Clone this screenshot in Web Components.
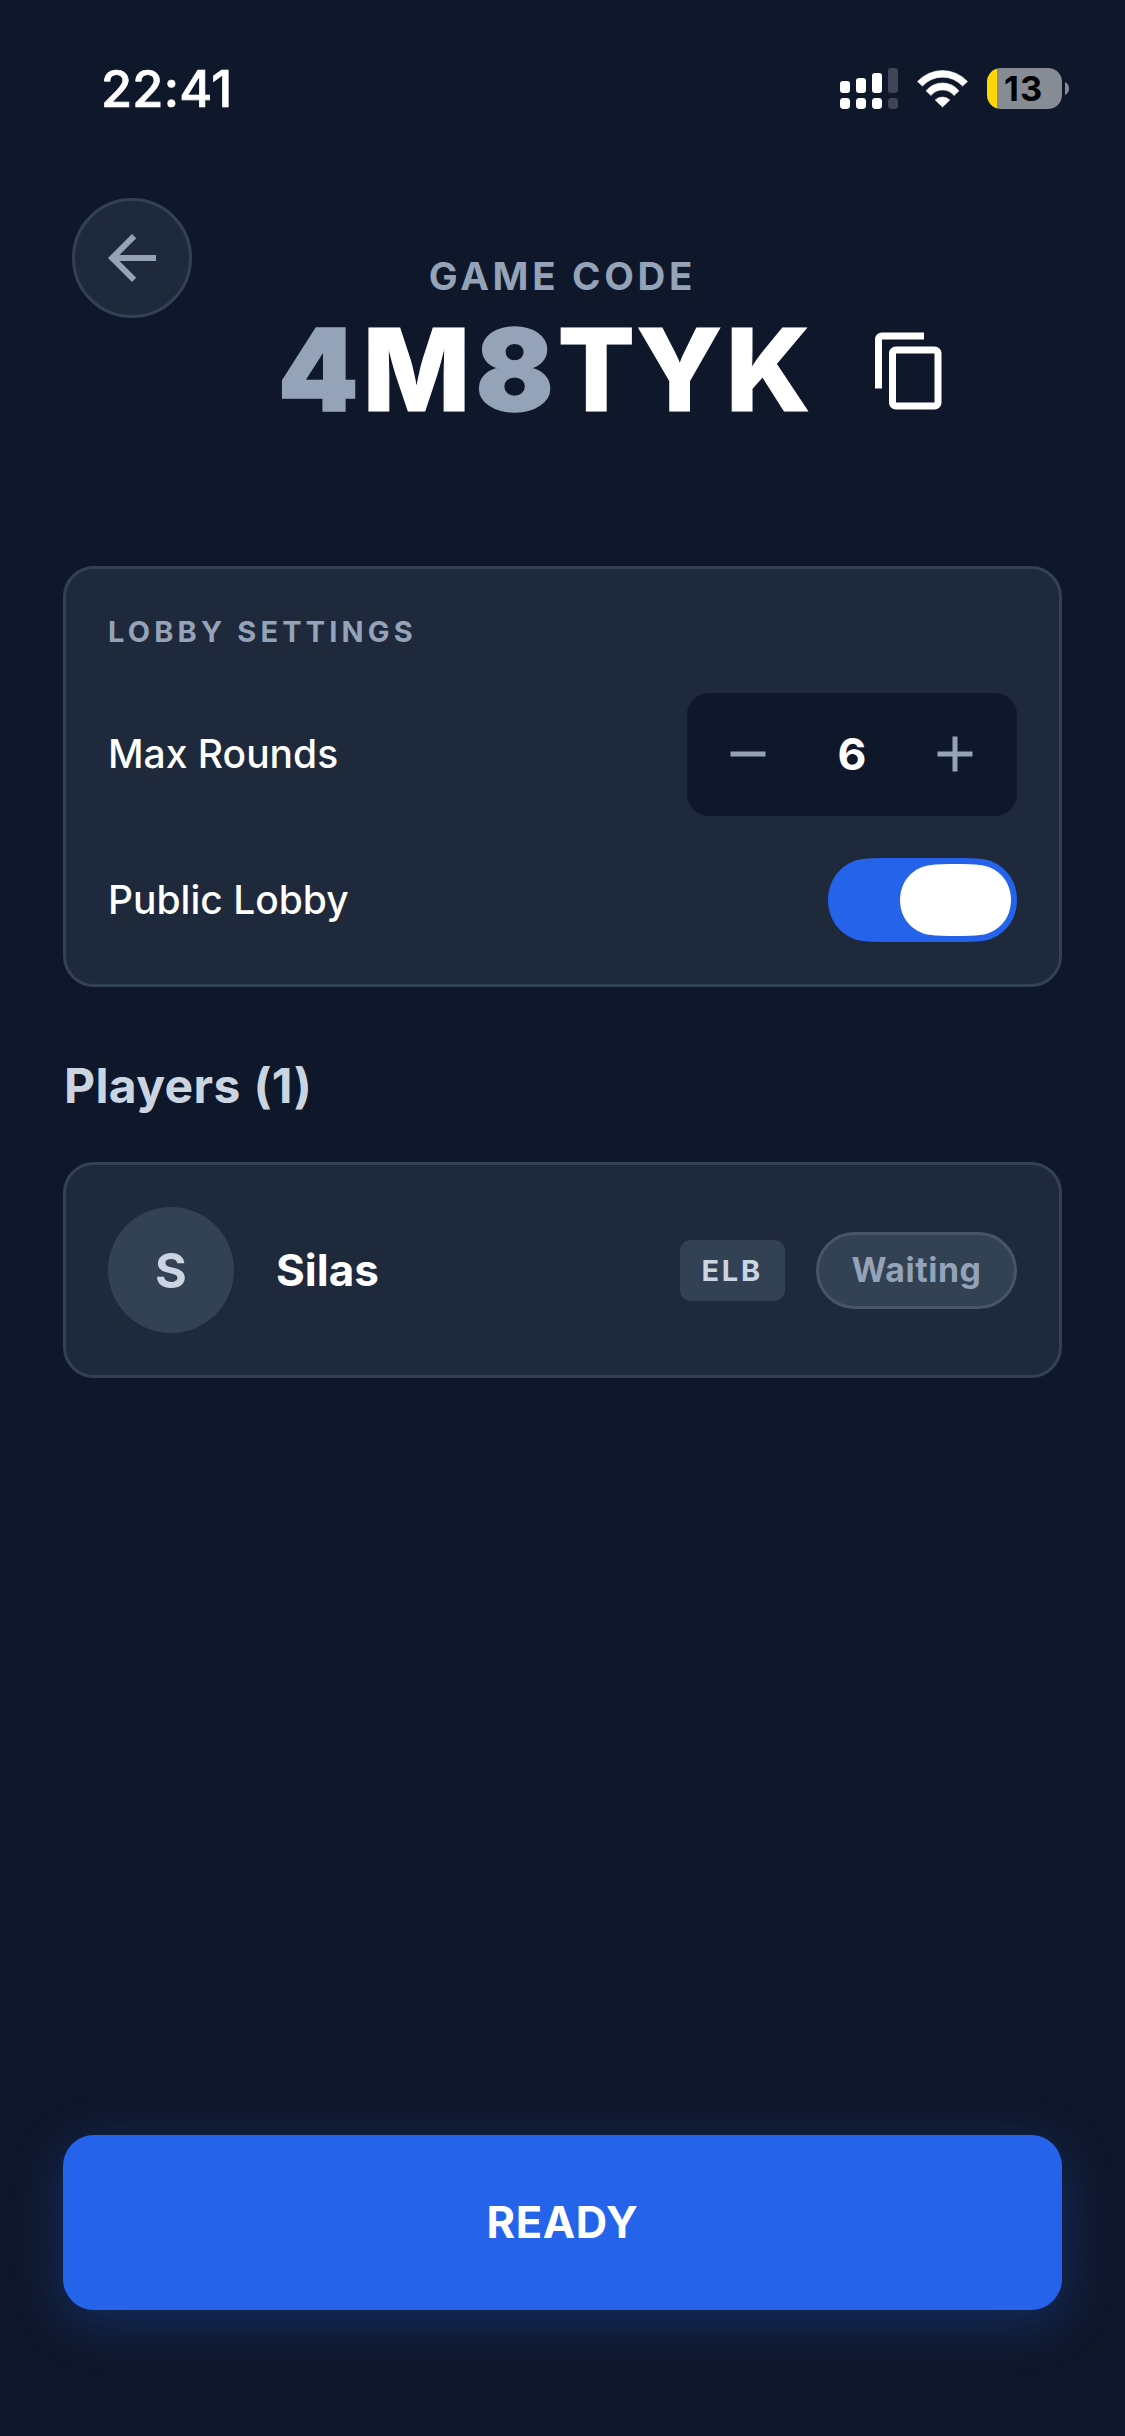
<!DOCTYPE html>
<html lang="en">
<head>
<meta charset="utf-8">
<title>Game lobby</title>
<style>
  html, body { margin: 0; height: 100%; }
  body {
    background: #0f172a;
    color: #fff;
    font-family: Inter, "Liberation Sans", sans-serif;
    --surface: #1e293b;
    --line: #334155;
    --muted: #94a3b8;
    --soft: #cbd5e1;
    --accent: #2563eb;
  }
</style>
</head>
<body>
<lobby-screen></lobby-screen>

<script>
const define = (name, html) => {
  const template = document.createElement('template');
  template.innerHTML = html;
  customElements.define(name, class extends HTMLElement {
    constructor() {
      super();
      this.attachShadow({ mode: 'open' }).append(template.content.cloneNode(true));
    }
  });
};

define('signal-icon', `
  <style>:host{display:block;width:58px;height:41px}svg{display:block}</style>
  <svg width="58" height="41" viewBox="0 0 58 41" fill="#fff">
    <rect x="0" y="13" width="10" height="12" rx="3"/>
    <rect x="16" y="10" width="10" height="15" rx="3"/>
    <rect x="32" y="5" width="10" height="20" rx="3"/>
    <rect x="48" y="0" width="10" height="25" rx="3" fill="#3f4556"/>
    <rect x="0" y="30" width="10" height="11" rx="3.4"/>
    <rect x="16" y="30" width="10" height="11" rx="3.4"/>
    <rect x="32" y="30" width="10" height="11" rx="3.4"/>
    <rect x="48" y="30" width="10" height="11" rx="3.4" fill="#3f4556"/>
  </svg>`);

define('wifi-icon', `
  <style>:host{display:block;width:51px;height:37px}svg{display:block;overflow:visible}</style>
  <svg width="51" height="37" viewBox="0 0 51 37" fill="#fff" stroke="#fff" stroke-width=".6" stroke-linejoin="round">
    <path d="M.5 11.5A34 34 0 0 1 50.5 11.5L45.6 16.1A27 27 0 0 0 5.4 16.1Z"/>
    <path d="M9 20.8A21.3 21.3 0 0 1 42 20.8L37 25.5A14.6 14.6 0 0 0 14 25.5Z"/>
    <path d="M18.2 30A10.5 10.5 0 0 1 32.8 30L25.5 37Z"/>
  </svg>`);

define('battery-icon', `
  <style>
    :host{display:flex;align-items:center;gap:3px}
    .body{display:flex;width:75px;height:41px;border-radius:14px;overflow:hidden;
      background:linear-gradient(90deg,#ffd60a 10px,#878b94 10px)}
    span{padding-left:17px;font-size:34.5px;line-height:41px;font-weight:700;letter-spacing:1.2px;color:#000}
    svg{display:block}
  </style>
  <div class="body"><span><slot></slot></span></div>
  <svg width="4" height="13" viewBox="0 0 4 13"><path d="M0 0C2.5 1 4 3.500 4 6.500S2.500 12 0 13Z" fill="#878b94"/></svg>`);

define('status-bar', `
  <style>
    :host{display:flex;align-items:center;justify-content:space-between;height:177px;box-sizing:border-box;padding:0 56px 0 101px}
    .time{font-size:50.5px;line-height:60px;font-weight:500;letter-spacing:.2px;-webkit-text-stroke:.7px #fff}
    .icons{display:flex;align-items:center;gap:19px}
  </style>
  <span class="time">22:41</span>
  <div class="icons"><signal-icon></signal-icon><wifi-icon></wifi-icon><battery-icon>13</battery-icon></div>`);

define('back-button', `
  <style>
    :host{display:flex;align-items:center;justify-content:center;width:120px;height:120px;box-sizing:border-box;
      border:3px solid var(--line);border-radius:50%;background:var(--surface);color:var(--muted)}
    svg{display:block}
  </style>
  <svg width="72" height="72" viewBox="0 0 24 24" fill="currentColor"><path d="M20 11H7.830l5.590-5.590L12 4l-8 8 8 8 1.410-1.410L7.830 13H20v-2z"/></svg>`);

define('copy-icon', `
  <style>:host{display:block}svg{display:block}</style>
  <svg width="84" height="84" viewBox="0 0 24 24" fill="#fff"><path d="M16 1H4c-1.100 0-2 .9-2 2v14h2V3h12V1zm3 4H8c-1.100 0-2 .9-2 2v14c0 1.100.9 2 2 2h11c1.100 0 2-.9 2-2V7c0-1.100-.9-2-2-2zm0 16H8V7h11v14z"/></svg>`);

define('game-code', `
  <style>
    :host{display:block}
    .label{font-size:38.5px;line-height:40px;font-weight:700;letter-spacing:3.700px;color:var(--muted);text-align:center}
    .row{display:flex;align-items:flex-start;padding:31px 0 0 278px}
    .code{padding-top:1px;font-size:114.5px;line-height:84px;font-weight:800;white-space:nowrap;-webkit-text-stroke:1px #fff}
    .code i{font-style:normal;font-weight:900;color:var(--muted);-webkit-text-stroke:1.500px var(--muted)}
    copy-icon{margin:1.500px 0 0 54.5px}
  </style>
  <div class="label">GAME CODE</div>
  <div class="row">
    <div class="code"><i style="letter-spacing:4px">4</i><span style="letter-spacing:5.300px">M</span><i style="letter-spacing:4px">8</i><span style="letter-spacing:1.300px">T</span><span style="letter-spacing:3.400px">Y</span><span style="letter-spacing:3.300px">K</span></div>
    <copy-icon></copy-icon>
  </div>`);

define('lobby-header', `
  <style>
    :host{display:grid;height:389px;box-sizing:border-box;padding-top:21px;grid-template-columns:1fr}
    back-button,game-code{grid-area:1/1}
    back-button{margin-left:72px}
    game-code{padding-top:58px}
  </style>
  <back-button></back-button><game-code></game-code>`);

define('surface-card', `
  <style>:host{display:block;box-sizing:border-box;border:3px solid var(--line);border-radius:31px;background:var(--surface);padding:42px}</style>
  <slot></slot>`);

define('round-stepper', `
  <style>
    :host{display:flex;align-items:center;justify-content:space-between;width:330px;height:123px;box-sizing:border-box;
      padding:0 32px 1px 31px;border-radius:22px;background:#0f172a;color:var(--muted)}
    svg{display:block}
    b{padding-left:1px;font-size:44.5px;line-height:60px;font-weight:700;color:#fff}
  </style>
  <svg width="60" height="60" viewBox="0 0 24 24" fill="currentColor"><path d="M19 13H5v-2h14v2z"/></svg>
  <b><slot></slot></b>
  <svg width="60" height="60" viewBox="0 0 24 24" fill="currentColor"><path d="M19 13h-6v6h-2v-6H5v-2h6V5h2v6h6v2z"/></svg>`);

define('toggle-switch', `
  <style>:host{display:block;width:189px;height:84px}svg{display:block}</style>
  <svg width="189" height="84" viewBox="0 0 189 84">
    <path fill="#2563eb" d="M0 42C0 21 14 4.500 33 1.200C42 0 50 0 60 0H129C139 0 147 0 156 1.200C175 4.500 189 21 189 42C189 63 175 79.500 156 82.800C147 84 139 84 129 84H60C50 84 42 84 33 82.800C14 79.500 0 63 0 42Z"/>
    <path fill="#fff" transform="translate(72 6)" d="M0 36C0 18 12 4 29 1.200C38 0 46 0 55.500 0C65 0 73 0 82 1.200C99 4 111 18 111 36C111 54 99 68 82 70.800C73 72 65 72 55.500 72C46 72 38 72 29 70.800C12 68 0 54 0 36Z"/>
  </svg>`);

define('setting-row', `
  <style>
    :host{display:flex;align-items:center;justify-content:space-between;font-size:39px;line-height:46px;font-weight:500;letter-spacing:0}
  </style>
  <slot name="label"></slot><slot></slot>`);

define('lobby-settings', `
  <style>
    :host{display:block}
    .title{padding:2px 0 0;font-size:29px;line-height:37px;font-weight:700;letter-spacing:4.150px;color:var(--muted);margin-bottom:43px}
    setting-row + setting-row{margin-top:42px}
    .rounds{padding-bottom:2px}
  </style>
  <surface-card>
    <div class="title">LOBBY SETTINGS</div>
    <setting-row><span slot="label" class="rounds">Max Rounds</span><round-stepper>6</round-stepper></setting-row>
    <setting-row><span slot="label">Public Lobby</span><toggle-switch></toggle-switch></setting-row>
  </surface-card>`);

define('player-row', `
  <style>
    :host{display:block}
    .row{display:flex;align-items:center}
    .avatar{width:126px;height:126px;box-sizing:border-box;padding-top:1px;border-radius:50%;background:var(--line);color:var(--soft);
      font-size:48.5px;line-height:60px;font-weight:700;display:flex;align-items:center;justify-content:center}
    .name{flex:1;margin-left:42px;font-size:44px;line-height:54px;font-weight:700;letter-spacing:0}
    .tag{width:105px;height:61px;box-sizing:border-box;padding-left:21.5px;border-radius:11px;background:var(--line);color:var(--soft);
      font-size:29px;line-height:61px;font-weight:700;letter-spacing:2.700px}
    .state{width:201px;height:77px;box-sizing:border-box;margin-left:31px;border:3px solid #475569;border-radius:39px;background:var(--line);
      color:var(--muted);font-size:33.8px;line-height:70px;font-weight:700;letter-spacing:.6px;padding-left:32.5px}
  </style>
  <surface-card><div class="row">
    <div class="avatar">S</div>
    <div class="name"><slot></slot></div>
    <div class="tag">ELB</div>
    <div class="state">Waiting</div>
  </div></surface-card>`);

define('primary-button', `
  <style>
    :host{display:flex;align-items:center;justify-content:center;height:175px;box-sizing:border-box;padding-bottom:2px;border-radius:31px;background:var(--accent);
      box-shadow:0 12px 54px rgba(37,99,235,.3);font-size:43.5px;line-height:54px;font-weight:700;letter-spacing:.6px}
  </style>
  <slot></slot>`);

define('lobby-screen', `
  <style>
    :host{display:flex;flex-direction:column;width:1125px;height:2436px;box-sizing:border-box;overflow:hidden}
    main{flex:1;display:flex;flex-direction:column;padding:0 63px 126px}
    h2{margin:70px 0 48px;padding-left:1px;font-size:48px;line-height:57px;font-weight:700;letter-spacing:.35px;word-spacing:1px;color:var(--soft)}
    primary-button{margin-top:auto}
  </style>
  <status-bar></status-bar>
  <lobby-header></lobby-header>
  <main>
    <lobby-settings></lobby-settings>
    <h2>Players (1)</h2>
    <player-row>Silas</player-row>
    <primary-button>READY</primary-button>
  </main>`);
</script>
</body>
</html>
